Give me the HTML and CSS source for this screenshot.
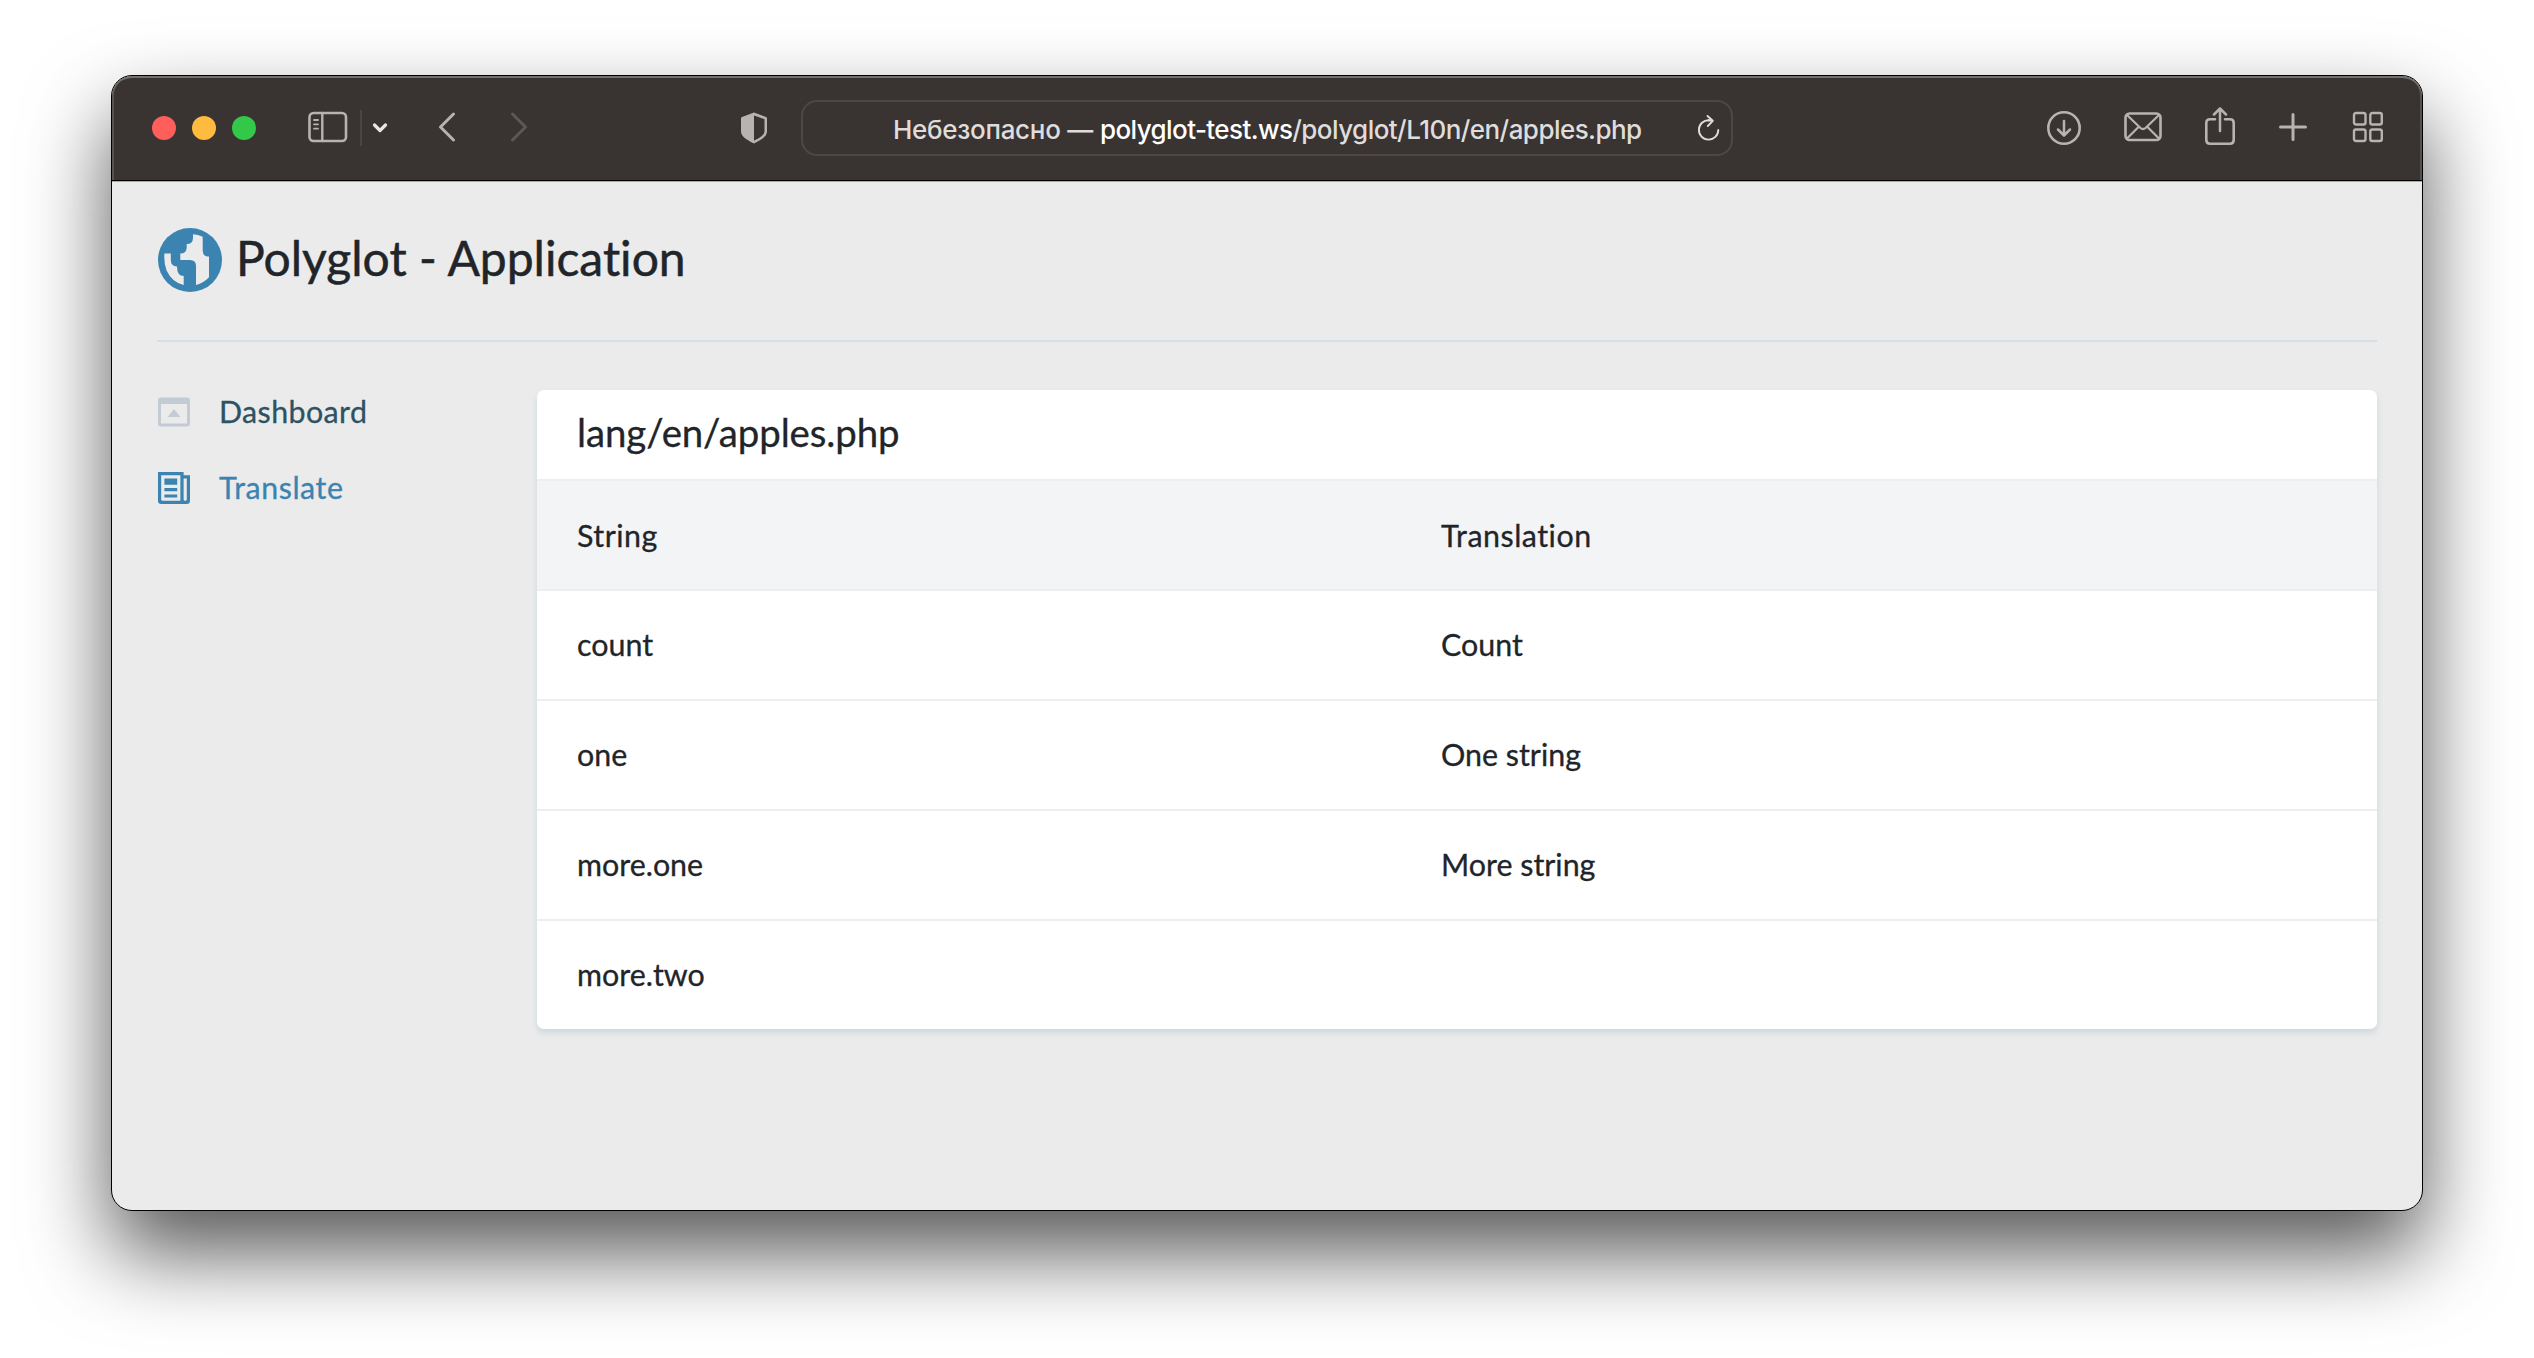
FILE: index.html
```
<!DOCTYPE html>
<html lang="en">
<head>
<meta charset="utf-8">
<title>Polyglot - Application</title>
<link rel="stylesheet" href="styles.css">
</head>
<body>
<div class="window">
  <header class="toolbar">
    <div class="side left">
      <div class="lights"><i class="red"></i><i class="yellow"></i><i class="green"></i></div>
      <svg class="icon sidebar" width="40" height="32" viewBox="0 0 40 32"><rect x="1.5" y="2" width="36.5" height="28" rx="4" stroke-width="2.600"/><path d="M14.3 2v28" stroke-width="2.400"/><path d="M6 9h4M6 13.3h4M6 17.700h4" stroke-width="1.800"/></svg>
      <span class="separator"></span>
      <svg class="icon chevron" width="16" height="12" viewBox="0 0 16 12"><path d="M2.500 3l5.500 5.500L13.500 3" stroke-width="3.200"/></svg>
      <svg class="icon back" width="18" height="30" viewBox="0 0 18 30"><path d="M15.500 2L2.500 15l13 13" stroke-width="3"/></svg>
      <svg class="icon forward" width="18" height="30" viewBox="0 0 18 30"><path d="M2.500 2l13 13-13 13" stroke-width="3"/></svg>
    </div>
    <svg class="icon shield" width="28" height="34" viewBox="0 0 28 34"><path d="M14 1.500L26 6q1 .4 1 1.500V20c0 5-4 8-13 12.500C5 28 1 25 1 20V7.500Q1 6.400 2 6z" stroke="none" fill="#b8b2b1"/><path d="M14 4.500l10.500 3.700V20c0 3.500-3 6-10.500 9.700z" stroke="none" fill="#393332"/></svg>
    <div class="address">
      <span class="warn">Небезопасно — </span><span class="host">polyglot-test.ws</span><span class="path">/polyglot/L10n/en/apples.php</span>
      <svg class="icon reload" width="24" height="28" viewBox="0 0 24 28"><path d="M12 6.200A9.700 9.700 0 1 0 21.300 16M10.500 2l5.300 4.800-5 5.200M15.500 6.700L11 6.200" stroke-width="1.900"/></svg>
    </div>
    <div class="side right">
      <svg class="icon" width="34" height="34" viewBox="0 0 34 34"><circle cx="17" cy="17" r="15.700" stroke-width="2.600"/><path d="M17 10v14M11 18.500l6 6 6-6" stroke-width="2.500"/></svg>
      <svg class="icon mail" width="38" height="30" viewBox="0 0 38 30"><rect x="1.500" y="1.500" width="35" height="26.500" rx="4" stroke-width="2.600"/><path d="M3 3l13.500 13q2.500 2 5 0L35 3M3 26.500l11.500-11.500M35 26.500L23.500 15" stroke-width="2.200"/></svg>
      <svg class="icon share" width="30" height="38" viewBox="0 0 30 38"><path d="M10 12.300H5Q1.300 12.300 1.300 16v17q0 3.700 3.700 3.700h20q3.700 0 3.700-3.700V16q0-3.700-3.700-3.700h-5" stroke-width="2.600"/><path d="M15 24V2M9 7.500l6-6 6 6" stroke-width="2.500"/></svg>
      <svg class="icon plus" width="28" height="28" viewBox="0 0 28 28"><path d="M14 1.500v25M1.500 14h25" stroke-width="3"/></svg>
      <svg class="icon grid" width="32" height="32" viewBox="0 0 32 32"><g stroke-width="2.400"><rect x="2" y="2" width="11.500" height="11.500" rx="2"/><rect x="18.300" y="2" width="11.500" height="11.500" rx="2"/><rect x="2" y="18.500" width="11.500" height="11.500" rx="2"/><rect x="18.300" y="18.500" width="11.500" height="11.500" rx="2"/></g></svg>
    </div>
  </header>
  <div class="page">
    <div class="brand">
      <svg width="64" height="64" viewBox="0 0 64 64"><circle cx="32" cy="32" r="32" fill="#3b83b0"/><path fill="#ebebeb" d="M35 6.300q5 .5 9.700 2.400v13.500q0 6.400 6.300 6.400v20.700q-5 5.400-13 7.800V38q0-6-6-6H22.300v-6.400q6.400 0 6.400-6.300v-3.200q6.300 0 6.300-6.400zM6.400 25.600h6.400v6.400q0 6.400 6.200 6.400 0 9.500 6.700 9.500V57Q14 54.400 8.600 42.500 5.700 35 6.400 25.600z"/></svg>
      <h1>Polyglot - Application</h1>
    </div>
    <div class="columns">
      <nav>
        <a class="item"><svg width="32" height="32" viewBox="0 0 32 32" fill="#c3ccd4"><path fill-rule="evenodd" d="M3 1.500h26q3 0 3 3v23q0 3-3 3H3q-3 0-3-3v-23q0-3 3-3zM3 8v19.500h26V8zM16 13l6.500 8h-13z"/></svg><span>Dashboard</span></a>
        <a class="item active"><svg width="32" height="32" viewBox="0 0 32 32" fill="#3b83b0"><path fill-rule="evenodd" d="M0 0h25.600v3.200H32V28.800q0 3.200-3.200 3.200H3.200Q0 32 0 28.800zM3.200 3.200v24q0 1.600 1.600 1.600H22.400V3.200zM25.600 6.400v20.800q0 1.600 1.600 1.600t1.600-1.600V6.400zM6.400 6.400h12.800v6.400H6.400zM6.400 16h12.800v3.200H6.400zM6.400 22.400h12.800v3.200H6.400z"/></svg><span>Translate</span></a>
      </nav>
      <main class="card">
        <h2>lang/en/apples.php</h2>
        <div class="row head"><span>String</span><span>Translation</span></div>
        <div class="row"><span>count</span><span>Count</span></div>
        <div class="row"><span>one</span><span>One string</span></div>
        <div class="row"><span>more.one</span><span>More string</span></div>
        <div class="row"><span>more.two</span><span></span></div>
      </main>
    </div>
  </div>
</div>
</body>
</html>
```
FILE: styles.css
```
* { box-sizing: border-box; }
body {
  margin: 0;
  padding: 75px 111px 147px;
  height: 1358px;
  overflow: hidden;
  background: #fff;
  color: #212529;
  font-family: Lato, sans-serif;
  font-size: 30.4px;
  font-variant-ligatures: none;
}
.window {
  height: 1136px;
  border: 1px solid #000;
  border-radius: 21px;
  overflow: hidden;
  background: #ebebeb;
  box-shadow: 0 42px 84px rgba(0, 0, 0, .66);
}
.toolbar {
  display: flex;
  align-items: center;
  height: 105px;
  border-bottom: 1px solid #000;
  border-radius: 20px 20px 0 0;
  background: #393332;
  box-shadow: inset 0 2px 0 #74716c, inset 2px 0 0 #575251, inset -2px 0 0 #575251;
}
.icon { display: block; flex: none; fill: none; stroke: #b8b2b1; stroke-linecap: round; stroke-linejoin: round; }
.side { display: flex; align-items: center; }
.left { width: 628px; padding-left: 40px; }
.lights { display: flex; gap: 16px; }
.lights i { width: 24px; height: 24px; border-radius: 50%; }
.red { background: #ff5f5a; }
.yellow { background: #febb40; }
.green { background: #34c84a; }
.sidebar { margin-left: 52px; margin-top: -3px; }
.separator { width: 2px; height: 36px; margin-left: 12px; background: #4b4645; }
.chevron { margin-left: 10px; stroke: #eae6e5; }
.back { margin-left: 50px; margin-top: -3px; }
.forward { margin-left: 54px; margin-top: -3px; stroke: #5d5756; }
.shield { margin-top: -1px; }
.address {
  display: flex;
  align-items: center;
  width: 932px;
  height: 56px;
  margin-left: 33px;
  padding: 3px 10px 0 90px;
  border: 2px solid #4d4847;
  border-radius: 16px;
  font: 500 26px/32px Inter, sans-serif;
  white-space: pre;
  color: #dfdddc;
}
.warn { width: 207px; letter-spacing: -.3px; }
.host { color: #fff; letter-spacing: -.6px; }
.path { letter-spacing: -.55px; }
.reload { margin-left: auto; margin-top: -4px; stroke: #dfdddc; }
.right { flex: 1; padding-left: 314px; margin-top: -1px; }
.mail { margin-left: 43px; margin-top: -1px; }
.share { margin-left: 43px; margin-top: -4px; }
.plus { margin-left: 44px; margin-top: -2px; }
.grid { margin-left: 45px; margin-top: -1px; }
.page {
  height: 1029px;
  padding: 46px 45px 0;
  border-top: 1px solid #aaa;
}
.brand {
  display: flex;
  align-items: center;
  height: 114px;
  padding: 0 0 48px 1px;
  border-bottom: 2px solid #d3dfe9;
}
h1 {
  margin: 0 0 5px 14px;
  font-size: 48px;
  font-weight: 400;
  line-height: 58px;
  -webkit-text-stroke: .5px;
}
.columns { display: flex; padding-top: 48px; }
nav { width: 380px; padding: 6px 0 0 1px; }
.item {
  display: flex;
  align-items: center;
  gap: 29px;
  height: 32px;
  margin-bottom: 44px;
  color: #2d5264;
  letter-spacing: .4px;
  -webkit-text-stroke: .3px;
}
.item span { padding-bottom: 3px; line-height: 36px; }
.active { color: #3b83b0; letter-spacing: .55px; }
.card {
  width: 1840px;
  border-radius: 7px;
  overflow: hidden;
  background: #fff;
  box-shadow: 0 4px 6px #cdd8df;
  -webkit-text-stroke: .3px;
}
h2 {
  display: flex;
  align-items: center;
  height: 91px;
  margin: 0;
  padding: 0 40px 5px;
  border-bottom: 2px solid #eeeeef;
  font-size: 38.4px;
  font-weight: 400;
  letter-spacing: -.1px;
}
.row {
  display: grid;
  grid-template-columns: 864px 1fr;
  align-items: center;
  height: 110px;
  padding: 0 0 2px 40px;
  border-bottom: 2px solid #eeeeef;
  line-height: 36px;
}
.row:last-child { height: 108px; border: 0; }
.head { background: #f3f4f6; letter-spacing: .5px; padding-bottom: 1px; }
```
